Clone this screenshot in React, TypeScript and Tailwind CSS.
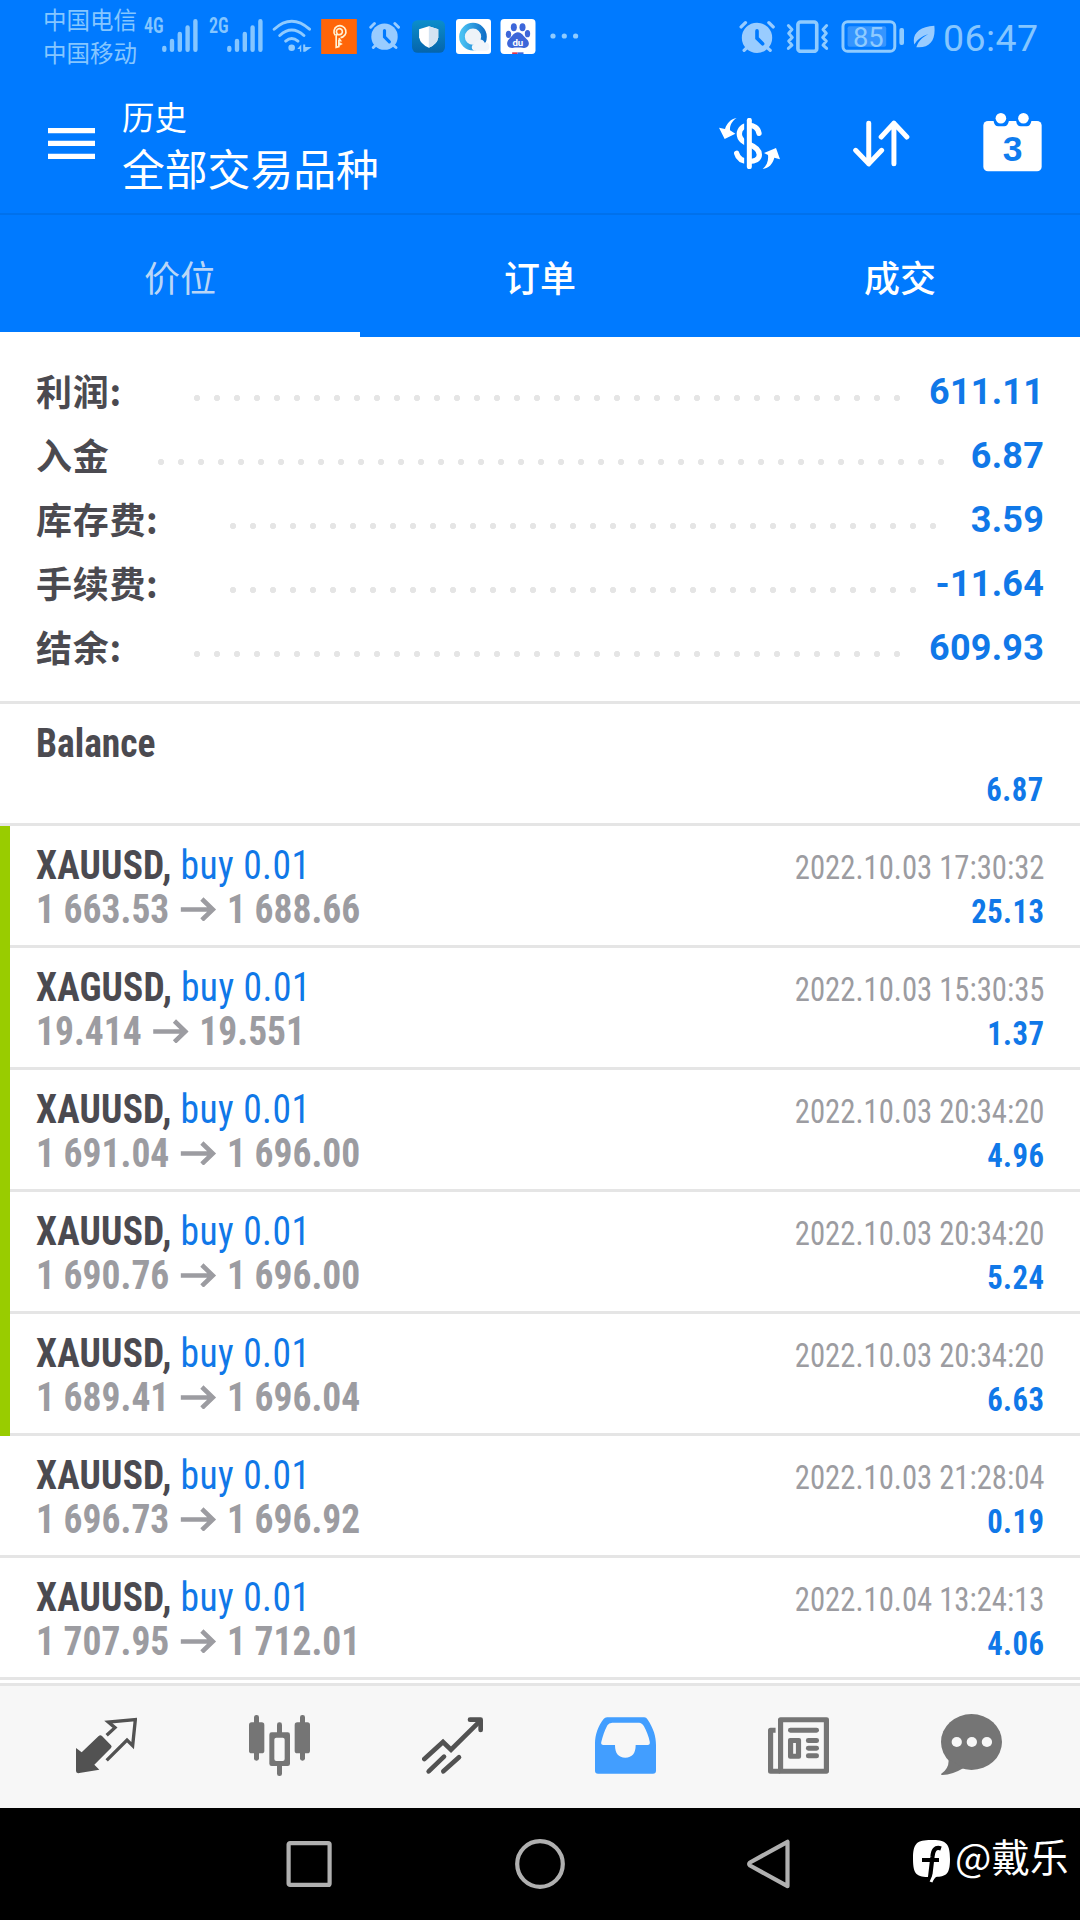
import { clsx } from 'clsx'

interface SummaryItem {
  label: string
  value: string
  labelClass: string
  dotsClass: string
}

interface Deal {
  symbol: string
  open: string
  close: string
  time: string
  profit: string
  marked: boolean
}

const summary: SummaryItem[] = [
  { label: '利润:', value: '611.11', labelClass: 'w-[151px]', dotsClass: 'w-[720px]' },
  { label: '入金', value: '6.87', labelClass: 'w-[115px]', dotsClass: 'w-[800px]' },
  { label: '库存费:', value: '3.59', labelClass: 'w-[187px]', dotsClass: 'w-[720px]' },
  { label: '手续费:', value: '-11.64', labelClass: 'w-[187px]', dotsClass: 'w-[700px]' },
  { label: '结余:', value: '609.93', labelClass: 'w-[151px]', dotsClass: 'w-[720px]' },
]

const deals: Deal[] = [
  { symbol: 'XAUUSD', open: '1 663.53', close: '1 688.66', time: '2022.10.03 17:30:32', profit: '25.13', marked: true },
  { symbol: 'XAGUSD', open: '19.414', close: '19.551', time: '2022.10.03 15:30:35', profit: '1.37', marked: true },
  { symbol: 'XAUUSD', open: '1 691.04', close: '1 696.00', time: '2022.10.03 20:34:20', profit: '4.96', marked: true },
  { symbol: 'XAUUSD', open: '1 690.76', close: '1 696.00', time: '2022.10.03 20:34:20', profit: '5.24', marked: true },
  { symbol: 'XAUUSD', open: '1 689.41', close: '1 696.04', time: '2022.10.03 20:34:20', profit: '6.63', marked: true },
  { symbol: 'XAUUSD', open: '1 696.73', close: '1 696.92', time: '2022.10.03 21:28:04', profit: '0.19', marked: false },
  { symbol: 'XAUUSD', open: '1 707.95', close: '1 712.01', time: '2022.10.04 13:24:13', profit: '4.06', marked: false },
]

const tabs = ['价位', '订单', '成交']

function Signal({ className }: { className?: string }) {
  return (
    <svg viewBox="0 0 36 33" className={clsx('w-[36px] h-[33px] mt-[19px]', className)} stroke="#85c6ff" strokeWidth="4.4" strokeLinecap="round">
      <path d="M2.3 29V30.8M10 22V30.8M17.8 15V30.8M25.6 8.5V30.8M33.4 2.3V30.8" />
    </svg>
  )
}

function Network({ name, className }: { name: string; className?: string }) {
  return (
    <span
      className={clsx(
        'w-[19px] mt-[15px] text-[21.5px] leading-[22px] font-semibold font-stretch-condensed origin-left scale-x-[0.84]',
        className
      )}
    >
      {name}
    </span>
  )
}

function Alarm({ className }: { className?: string }) {
  return (
    <svg viewBox="415 59 108 100" className={className} fill="none" strokeLinecap="round">
      <circle cx="469" cy="113" r="46" fill="#99ccff" />
      <path d="M421 80l13-13M505 67l13 13M430 151l9-9M499 142l10 9" stroke="#99ccff" strokeWidth="10" />
      <path d="M469 92v22l17 17" stroke="#007aff" strokeWidth="11" />
    </svg>
  )
}

function AppBadges() {
  return (
    <>
      <svg viewBox="155 27 107 105" className="w-[36px] h-[35px] mt-[19px] ml-[9px]" fill="none" stroke="#fff3d6" strokeWidth="5">
        <rect x="155" y="27" width="107" height="105" fill="#ff6508" stroke="none" />
        <path d="M197 76a18 18 0 1 1 16 7" />
        <path d="M204 72a9 9 0 1 1 5 2h-7M200 72v40l8-2V92h5l-5-7M208 98l7 4-7 4" />
      </svg>
      <Alarm className="w-[31px] h-[29px] mt-[21px] ml-[12px]" />
      <svg viewBox="429 30 98 97" className="w-[33px] h-[33px] mt-[20px] ml-[12px]">
        <defs>
          <linearGradient id="guard" x1="0" y1="0" x2="0" y2="1">
            <stop offset="0" stopColor="#0b8ecb" />
            <stop offset="1" stopColor="#0564ab" />
          </linearGradient>
        </defs>
        <rect x="429" y="30" width="98" height="97" rx="17" fill="url(#guard)" />
        <path d="M479 48l28 9v24q-3 21-28 31-25-10-29-31V57z" fill="#fff" />
        <path d="M479 48l28 9v24q-3 21-28 31z" fill="#d3e3f2" />
      </svg>
      <svg viewBox="561 26 105 105" className="w-[35px] h-[35px] mt-[19px] ml-[11px]">
        <defs>
          <linearGradient id="ring" x1="0" y1="0" x2="1" y2="0">
            <stop offset="0" stopColor="#49c0f2" />
            <stop offset="1" stopColor="#1273c9" />
          </linearGradient>
        </defs>
        <rect x="561" y="26" width="105" height="105" rx="9" fill="#fff" />
        <circle cx="612" cy="79" r="33" fill="#eef3f8" stroke="url(#ring)" strokeWidth="17" />
        <path d="M615 121a11 11 0 0 1 2-21 16 16 0 0 1 30-3 12 12 0 0 1 4 24z" fill="#f1f5fa" />
      </svg>
      <svg viewBox="695 26 107 105" className="w-[36px] h-[35px] mt-[19px] ml-[9px]" fill="#3d66d9">
        <rect x="696" y="26" width="105" height="105" rx="11" fill="#fff" />
        <ellipse cx="736" cy="51" rx="9" ry="12" />
        <ellipse cx="762" cy="51" rx="9" ry="12" />
        <ellipse cx="720" cy="72" rx="8" ry="11" />
        <ellipse cx="777" cy="70" rx="8" ry="11" />
        <path d="M748 66c12 0 17 12 26 20 13 11 7 28-8 27-12-2-25-2-34 0-17 1-21-16-10-27 9-8 14-20 26-20z" />
        <text x="748" y="106" fontSize="29" fontWeight="700" textAnchor="middle" fill="#fff" className="font-['Roboto']">du</text>
        <path d="M731 126h16v5h-16z" fill="#e0344a" />
        <path d="M747 126h18v5h-18z" />
      </svg>
    </>
  )
}

function StatusBar() {
  return (
    <div className="flex items-start h-[74px] pl-[43px] pr-[43px] text-[#85c6ff]">
      <div className="w-[95px] mt-[3px] text-[23.5px] leading-[33px] whitespace-nowrap font-['Noto_Sans_CJK_SC',sans-serif]">
        <div>中国电信</div>
        <div>中国移动</div>
      </div>
      <Network name="4G" className="ml-[6px]" />
      <Signal className="-ml-px" />
      <Network name="2G" className="ml-[11px]" />
      <Signal className="-ml-px" />
      <svg viewBox="10 26 120 100" className="w-[40px] h-[33px] mt-[19px] ml-[9px]" fill="none" stroke="#8fcbff" strokeLinecap="round" strokeWidth="9">
        <path d="M16 57Q69 9 123 57M33 76Q69 43 106 76M51 93Q69 77 88 93" />
        <circle cx="69" cy="113" r="10" fill="#8fcbff" stroke="none" />
        <path d="M86 117l12-14v22h-4v-8zM104 103h6v8h20l-20 14h-6z" fill="#8fcbff" stroke="none" />
      </svg>
      <AppBadges />
      <svg viewBox="0 0 30 6" className="w-[30px] h-[6px] mt-[33px] ml-[14px]" fill="#8fcbff">
        <circle cx="3" cy="3" r="2.6" />
        <circle cx="14.3" cy="3" r="2.6" />
        <circle cx="25.6" cy="3" r="2.6" />
      </svg>

      <Alarm className="w-[36px] h-[33px] mt-[20px] ml-auto" />
      <svg viewBox="557 59 128 100" className="w-[43px] h-[33px] mt-[20px] ml-[11px]" fill="none" stroke="#8fcbff" strokeWidth="9" strokeLinecap="round" strokeLinejoin="round">
        <rect x="592" y="65" width="57" height="89" rx="8" strokeWidth="11" />
        <path d="M563 76l11 12-10 11 11 13-11 11 10 12-11 10M679 76l-11 12 10 11-11 13 11 11-10 12 11 10" />
      </svg>
      <svg viewBox="722 59 192 100" className="w-[64px] h-[33px] mt-[20px] ml-[12px]" fill="#8fcbff">
        <rect x="727" y="64" width="157" height="90" rx="14" fill="none" stroke="#8fcbff" strokeWidth="9" />
        <rect x="741" y="78" width="117" height="62" rx="6" fill="#3595ff" />
        <text x="804" y="140" fontSize="83" textAnchor="middle" className="font-['Roboto'] font-normal">85</text>
        <rect x="898" y="83" width="14" height="52" rx="6" />
      </svg>
      <svg viewBox="940 75 66 68" className="w-[22px] h-[23px] mt-[25px] ml-[8px]" fill="#99ccff">
        <path d="M1004 77c5 43-14 68-54 64 6-20 20-31 36-39-21 6-34 17-42 31-8-30 14-54 60-56z" />
      </svg>
      <span className="w-[94px] ml-[8px] mt-[18px] text-[37.5px] leading-[40px] font-normal tracking-[0.4px] whitespace-nowrap">06:47</span>
    </div>
  )
}

function Header() {
  return (
    <header className="flex items-center h-[141px] pl-[48px] pr-[38px] border-b-2 border-[#0071ec] text-white">
      <svg viewBox="0 0 47 31" className="w-[47px] h-[31px]" fill="#fff">
        <path d="M0 0h47v5.3H0zM0 12.8h47v5.3H0zM0 25.7h47V31H0z" />
      </svg>
      <div className="ml-[27px] pb-[4px] whitespace-nowrap font-['Noto_Sans_CJK_SC',sans-serif]">
        <div className="text-[32.5px] leading-[50px]">历史</div>
        <div className="text-[42.8px] leading-[52px]">全部交易品种</div>
      </div>
      <div className="flex items-center gap-[73px] ml-auto">
        <svg viewBox="117 84 183 153" className="w-[61px] h-[51px]" fill="none" strokeLinecap="round">
          <path d="M237 130c-3-17-17-24-30-24-18 0-29 12-29 26 0 17 14 24 29 31 18 7 31 16 31 31 0 13-13 20-30 20-20 0-34-8-38-24" stroke="#fff" strokeWidth="16" />
          <path d="M197 90v141" stroke="#007aff" strokeWidth="9" />
          <path d="M208 91v139" stroke="#fff" strokeWidth="15" />
          <path d="M170 84c-14 9-21 22-20 37l16 10-32 16-17-34 18 4c6-18 17-30 35-33zM248 237c13-11 18-25 16-42l-12-6 36-15 12 34-17-5c-5 19-16 31-35 34z" fill="#fff" />
        </svg>
        <svg viewBox="519 90 172 141" className="w-[57px] h-[47px]" fill="none" stroke="#fff" strokeWidth="15" strokeLinecap="round" strokeLinejoin="round">
          <path d="M566.5 99v123M527 181l39.5 41 39-41M642.5 222V99M604 141l38.5-42 39 42" />
        </svg>
        <svg viewBox="908 68 178 178" className="w-[59px] h-[59px] mb-[2px]" fill="#fff">
          <rect x="909" y="92" width="176" height="152" rx="14" />
          <path d="M940 88h46v4q-3 16-14 16h-18q-12 0-14-16zM1008 88h46v4q-3 16-14 16h-18q-12 0-14-16z" fill="#007aff" />
          <circle cx="962" cy="84" r="16" />
          <circle cx="1030" cy="84" r="16" />
          <text x="997" y="213" fontSize="107" textAnchor="middle" fill="#0f7cee" className="font-['Liberation_Sans'] font-bold">3</text>
        </svg>
      </div>
    </header>
  )
}

function DealRow({ deal }: { deal: Deal }) {
  return (
    <div className="flex h-[122px]">
      <div className={clsx('w-[10px]', deal.marked ? 'bg-[#99cc00]' : 'border-b-3 border-[#e5e5e5]')} />
      <div className="flex flex-1 justify-between pl-[26px] pr-[36px] border-b-3 border-[#e5e5e5] font-stretch-condensed">
        <div className="pt-[17px] text-[41px] leading-[44px] whitespace-nowrap origin-left scale-x-[0.915]">
          <div>
            <span className="font-bold text-[#4b4a50] tracking-[0.2px]">{deal.symbol}, </span>
            <span className="text-[#1078e8] tracking-[0.5px]">buy 0.01</span>
          </div>
          <div className="flex items-center font-bold text-[#9c9ca1]">
            <span>{deal.open}</span>
            <svg viewBox="0 0 36 24" preserveAspectRatio="none" className="w-[39px] h-[24px] mx-[12px]" fill="none" stroke="#9c9ca1" strokeWidth="4.6">
              <path d="M0 12.5h32M21.5 2l11 10.5-11 10.5" />
            </svg>
            <span>{deal.close}</span>
          </div>
        </div>
        <div className="pt-[20px] text-[33px] leading-[44px] text-right whitespace-nowrap origin-right scale-x-[0.93]">
          <div className="text-[#9c9ca1]">{deal.time}</div>
          <div className="font-bold text-[#1078e8] tracking-[0.5px]">{deal.profit}</div>
        </div>
      </div>
    </div>
  )
}

function BottomNav() {
  return (
    <nav className="grid grid-cols-6 justify-items-center h-[125px] pl-[20px] pr-[22px] pt-[29px] mt-[3px] bg-[#f7f7f7] border-t-3 border-[#e5e5e5]">
      <svg viewBox="108 165 183 183" className="w-[61px] h-[61px]">
        <path d="M108 264l17 13 51-49q5-4 10 0l27 28q4 4 0 8l-50 50 15 15-60 10q-10 2-10-6z" fill="#525252" />
        <path d="M200 226l25-23-20-17 81-7-8 78-17-17-61 61" fill="none" stroke="#525252" strokeWidth="10" />
      </svg>
      <svg viewBox="627 165 183 183" className="w-[61px] h-[61px]" fill="#757575">
        <rect x="642" y="165" width="15" height="137" rx="7" />
        <rect x="627" y="187" width="46" height="93" rx="8" />
        <rect x="780" y="165" width="15" height="137" rx="7" />
        <rect x="764" y="187" width="46" height="93" rx="8" />
        <rect x="711" y="187" width="15" height="161" rx="7" />
        <rect x="688" y="217" width="62" height="101" rx="7" />
        <rect x="703" y="233" width="31" height="70" rx="6" fill="#f7f7f7" />
      </svg>
      <svg viewBox="1146 165 183 183" className="w-[61px] h-[61px]" fill="none" stroke="#525252" strokeWidth="14" strokeLinecap="round">
        <path d="M1153 297l56-51 24 23 86-85" />
        <path d="M1290 179h32v31" strokeLinejoin="round" />
        <path d="M1166 334l46-44M1210 334l47-42" />
      </svg>
      <svg viewBox="160 165 177 183" preserveAspectRatio="none" className="w-[61px] h-[61px]" fill="#429eff">
        <path
          fillRule="evenodd"
          d="M195 172H303q6 0 9 6c18 27 25 52 25 77v77q0 9-9 9H169q-9 0-9-9V250c0-25 10-55 25-73q4-5 10-5zM210 188q-10 0-14 8c-8 15-14 34-18 51q-1 8 6 8h34c0 25 10 38 30 38s30-13 30-38h35q7 0 6-9c-3-16-10-34-17-47q-6-11-14-11z"
        />
      </svg>
      <svg viewBox="662 165 177 183" preserveAspectRatio="none" className="w-[61px] h-[61px]" fill="#757575">
        <g fill="none" stroke="#757575" strokeWidth="15" strokeLinejoin="round">
          <rect x="698.5" y="179.5" width="133" height="154" />
          <path d="M684 211h-14.5v122.5h28" />
        </g>
        <rect x="720" y="203" width="90" height="15" rx="7" />
        <path fillRule="evenodd" d="M726 234h26q6 0 6 6v50q0 6-6 6h-26q-6 0-6-6v-50q0-6 6-6zM735 249v32h8v-32z" />
        <rect x="772" y="234" width="38" height="15" rx="7" />
        <rect x="772" y="257" width="38" height="15" rx="7" />
        <rect x="772" y="280" width="38" height="15" rx="7" />
      </svg>
      <svg viewBox="1164 162 178 183" preserveAspectRatio="none" className="w-[61px] h-[61px] -mt-px" fill="#757575">
        <ellipse cx="1253" cy="246" rx="89" ry="84" />
        <path d="M1186 296q3 28-22 46-1 3 4 3 30-1 62-21z" />
        <g fill="#f7f7f7">
          <circle cx="1210" cy="246" r="15" />
          <circle cx="1254" cy="246" r="15" />
          <circle cx="1298" cy="246" r="15" />
        </g>
      </svg>
    </nav>
  )
}

function SystemNav() {
  return (
    <div className="flex items-center h-[112px] pl-[284px] bg-black">
      <svg viewBox="0 0 50 50" className="w-[50px] h-[50px]" fill="none" stroke="#b0b0b0" strokeWidth="4.2">
        <rect x="4.6" y="4.1" width="41" height="41.8" rx="1.5" />
      </svg>
      <svg viewBox="0 0 50 50" className="w-[50px] h-[50px] ml-[181px]" fill="none" stroke="#b0b0b0" strokeWidth="4.2">
        <circle cx="25" cy="25" r="22.8" />
      </svg>
      <svg viewBox="0 0 50 50" className="w-[50px] h-[50px] ml-[179px]" fill="none" stroke="#b0b0b0" strokeWidth="4.2" strokeLinejoin="round">
        <path d="M43.5 2.8v44.4L6 26.5q-1.5-1.5 0-3z" />
      </svg>
      <svg viewBox="0 0 38 44" className="w-[38px] h-[44px] ml-[119px] mb-[6px]">
        <path d="M18 1C32 1 37 3 37 20S32 37 23 38l-5 5-1-5C4 38 0 36 0 20S4 1 18 1z" fill="#fff" />
        <path d="M28 9.500c-6-2-8 2-8.500 8L16.500 43M9 21h17" fill="none" stroke="#000" strokeWidth="4.200" />
        <path d="M22 34l-4 9" stroke="#fff" strokeWidth="3" />
      </svg>
      <span className="ml-[4px] mb-[18px] text-[38.5px] leading-[44px] whitespace-nowrap text-white font-['Noto_Sans_CJK_SC',sans-serif]">@戴乐</span>
    </div>
  )
}

export default function App() {
  return (
    <div className="flex flex-col w-[1080px] h-[1920px] overflow-hidden bg-white font-['Roboto','Noto_Sans_CJK_SC',sans-serif]">
      <div className="bg-[#007aff]">
        <StatusBar />
        <Header />
        <div className="grid grid-cols-3 h-[122px] text-[36px] font-['Noto_Sans_CJK_SC',sans-serif]">
          {tabs.map((tab, i) => (
            <div
              key={tab}
              className={clsx(
                'flex items-center justify-center pt-[4px]',
                i === 0 ? 'border-b-5 border-white text-[#b9d6f7]' : 'pb-[5px] font-medium text-white'
              )}
            >
              {tab}
            </div>
          ))}
        </div>
      </div>

      <section className="h-[367px] pt-[23px] px-[36px] border-b-3 border-[#e5e5e5]">
        {summary.map((item) => (
          <div key={item.label} className="flex items-center h-[64px]">
            <span className={clsx('shrink-0 text-[36px] leading-[64px] font-bold text-[#4b4a50]', item.labelClass)}>
              <span className="font-['Noto_Sans_CJK_SC',sans-serif] tracking-[0.7px]">{item.label}</span>
            </span>
            <span
              className={clsx(
                'shrink-0 h-[8px] mt-[11px] bg-[radial-gradient(circle,#e5e5e5_2.8px,transparent_3.5px)] bg-size-[20px_8px]',
                item.dotsClass
              )}
            />
            <span className="ml-auto text-[36px] leading-[64px] font-bold text-[#1078e8] tracking-[0.2px]">{item.value}</span>
          </div>
        ))}
      </section>

      <div className="flex justify-between h-[122px] px-[36px] border-b-3 border-[#e5e5e5] font-bold font-stretch-condensed">
        <span className="pt-[17px] text-[41px] leading-[44px] text-[#4b4a50] origin-left scale-x-[0.915]">Balance</span>
        <span className="pt-[64px] text-[33px] leading-[44px] text-[#1078e8] tracking-[0.5px] origin-right scale-x-[0.93]">6.87</span>
      </div>
      {deals.map((deal, i) => (
        <DealRow key={i} deal={deal} />
      ))}

      <BottomNav />
      <SystemNav />
    </div>
  )
}
